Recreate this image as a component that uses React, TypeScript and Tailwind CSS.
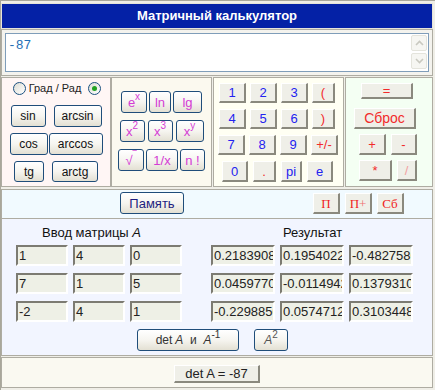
import React from "react";

const xp =
  "flex items-center justify-center rounded-[3px] border border-[#1f4d7a] bg-linear-to-b from-white via-[#f6f5f0] to-[#e3e0d3] leading-none";
const classic =
  "flex items-center justify-center bg-[#efefe8] border border-white border-r-2 border-b-2 border-r-[#8a897e] border-b-[#8a897e] leading-none";
const field =
  "h-[21px] bg-[#eef0e6] border-2 border-t-[#7c7b72] border-l-[#7c7b72] border-b-white border-r-white pl-[1px] text-[13px] leading-[17px] text-[#222] overflow-hidden whitespace-nowrap";

function Radio({ checked }: { checked?: boolean }) {
  return (
    <div className="w-[13px] h-[13px] rounded-full border border-[#1c5180] bg-linear-to-br from-[#dcdcd4] to-white flex items-center justify-center">
      {checked && <div className="w-[5px] h-[5px] rounded-full bg-[#21a121]" />}
    </div>
  );
}

function Sup({ children }: { children: React.ReactNode }) {
  return <span className="relative -top-[5px] text-[10px]">{children}</span>;
}

const matrix = [
  ["1", "4", "0"],
  ["7", "1", "5"],
  ["-2", "4", "1"],
];

const result = [
  ["0.2183908", "0.1954022", "-0.4827586"],
  ["0.0459770", "-0.0114942", "0.1379310"],
  ["-0.2298850", "0.0574712", "0.3103448"],
];

export default function App() {
  const blue = "text-[#2323f0]";
  const red = "text-[#f22b2b]";
  const pink = "text-[#d43cd4]";
  return (
    <div className="w-[435px] h-[390px] overflow-hidden bg-[#efeee7] border-t border-l border-[#a9a79b] pt-[2px] font-['Liberation_Sans',Arial,sans-serif]">
      <div className="w-[432px] flex flex-col">
        {/* title */}
        <div className="h-[26px] border border-[#e6e4da] bg-[#0421a6] flex items-center justify-center text-white font-bold text-[13px]">
          Матричный калькулятор
        </div>

        {/* display */}
        <div className="h-[47px] border border-[#aeaca2] bg-[#f4f3ee] pt-[3px] pl-[3px]">
          <div className="w-[424px] h-[39px] border border-[#7f9db9] bg-white flex">
            <div className="flex-1 pl-[2px] pt-[4px] font-['Liberation_Mono',monospace] text-[13px] leading-[15px] text-[#1f6fb6]">
              -87
            </div>
            <div className="w-[17px] flex flex-col gap-[2px] pt-[1px] pr-[1px]">
              <div className="h-[16px] rounded-[2px] border border-[#e4e4dc] bg-[#f6f6f2] flex items-center justify-center">
                <svg width="9" height="6" viewBox="0 0 9 6"><path d="M1 5 L4.5 1.5 L8 5" stroke="#c9c9c0" strokeWidth="1.6" fill="none" /></svg>
              </div>
              <div className="h-[16px] rounded-[2px] border border-[#e4e4dc] bg-[#f6f6f2] flex items-center justify-center">
                <svg width="9" height="6" viewBox="0 0 9 6"><path d="M1 1 L4.5 4.5 L8 1" stroke="#c9c9c0" strokeWidth="1.6" fill="none" /></svg>
              </div>
            </div>
          </div>
        </div>

        {/* keypad */}
        <div className="mt-[1px] h-[110px] flex">
          {/* trig */}
          <div className="w-[110px] border border-[#aeaca2] bg-[#fff6f5] flex flex-col items-center pt-[4px] text-[12px] text-[#111]">
            <div className="flex items-center h-[13px] ml-[2px]">
              <Radio />
              <span className="ml-[3px] text-[11px] text-[#222]">Град / Рад</span>
              <span className="ml-[7px]"><Radio checked /></span>
            </div>
            <div className="flex gap-[8px] mt-[10px]">
              <div className={`${xp} w-[35px] h-[22px]`}>sin</div>
              <div className={`${xp} w-[48px] h-[22px]`}>arcsin</div>
            </div>
            <div className="flex gap-[1px] mt-[6px]">
              <div className={`${xp} w-[38px] h-[22px]`}>cos</div>
              <div className={`${xp} w-[54px] h-[22px]`}>arccos</div>
            </div>
            <div className="flex gap-[8px] mt-[6px]">
              <div className={`${xp} w-[30px] h-[21px]`}>tg</div>
              <div className={`${xp} w-[46px] h-[21px]`}>arctg</div>
            </div>
          </div>

          {/* powers */}
          <div className={`w-[101px] border border-[#aeaca2] bg-[#fbf9ef] flex flex-col items-center pt-[13px] text-[13px] ${pink}`}>
            <div className="flex gap-[2px]">
              <div className={`${xp} w-[26px] h-[22px]`}>e<Sup>x</Sup></div>
              <div className={`${xp} w-[22px] h-[22px]`}>ln</div>
              <div className={`${xp} w-[29px] h-[22px]`}>lg</div>
            </div>
            <div className="flex gap-[3px] mt-[7px]">
              <div className={`${xp} w-[25px] h-[22px]`}>x<Sup>2</Sup></div>
              <div className={`${xp} w-[25px] h-[22px]`}>x<Sup>3</Sup></div>
              <div className={`${xp} w-[28px] h-[22px]`}>x<Sup>y</Sup></div>
            </div>
            <div className="flex gap-[2px] mt-[7px]">
              <div className={`${xp} w-[26px] h-[22px]`}>√<span className="relative -top-[5px] text-[11px]">‾</span></div>
              <div className={`${xp} w-[32px] h-[22px]`}>1/x</div>
              <div className={`${xp} w-[25px] h-[22px]`}>n !</div>
            </div>
          </div>

          {/* digits */}
          <div className="ml-[1px] w-[131px] border border-[#aeaca2] bg-[#fffff3] flex flex-col pt-[5px] text-[13px]">
            <div className="flex gap-[4px] ml-[5px]">
              <div className={`${classic} w-[27px] h-[20px] ${blue}`}>1</div>
              <div className={`${classic} w-[27px] h-[20px] ${blue}`}>2</div>
              <div className={`${classic} w-[27px] h-[20px] ${blue}`}>3</div>
              <div className={`${classic} w-[23px] h-[20px] ${red}`}>(</div>
            </div>
            <div className="flex gap-[4px] ml-[5px] mt-[6px]">
              <div className={`${classic} w-[27px] h-[20px] ${blue}`}>4</div>
              <div className={`${classic} w-[27px] h-[20px] ${blue}`}>5</div>
              <div className={`${classic} w-[27px] h-[20px] ${blue}`}>6</div>
              <div className={`${classic} w-[23px] h-[20px] ${red}`}>)</div>
            </div>
            <div className="flex gap-[4px] ml-[4px] mt-[6px]">
              <div className={`${classic} w-[27px] h-[20px] ${blue}`}>7</div>
              <div className={`${classic} w-[27px] h-[20px] ${blue}`}>8</div>
              <div className={`${classic} w-[27px] h-[20px] ${blue}`}>9</div>
              <div className={`${classic} w-[27px] h-[20px] ${red}`}>+/-</div>
            </div>
            <div className="flex gap-[5px] ml-[8px] mt-[6px]">
              <div className={`${classic} w-[26px] h-[21px] ${blue}`}>0</div>
              <div className={`${classic} w-[23px] h-[21px] ${red}`}>.</div>
              <div className={`${classic} w-[21px] h-[21px] ${blue}`}>pi</div>
              <div className={`${classic} w-[26px] h-[21px] ${blue}`}>e</div>
            </div>
          </div>

          {/* operators */}
          <div className={`ml-[1px] w-[88px] border border-[#aeaca2] bg-[#f4fff3] flex flex-col pt-[5px] text-[13px] ${red}`}>
            <div className={`${classic} ml-[15px] w-[52px] h-[16px] bg-[#e2e2dc]`}>=</div>
            <div className={`${classic} ml-[8px] mt-[9px] w-[62px] h-[21px] bg-[#e2e2dc] text-[14px]`}>Сброс</div>
            <div className="flex gap-[5px] ml-[13px] mt-[5px]">
              <div className={`${classic} w-[27px] h-[21px]`}>+</div>
              <div className={`${classic} w-[26px] h-[21px]`}>-</div>
            </div>
            <div className="flex gap-[5px] ml-[13px] mt-[5px]">
              <div className={`${classic} w-[33px] h-[21px]`}>*</div>
              <div className={`${classic} w-[20px] h-[21px] text-[#f2a0a0]`}>/</div>
            </div>
          </div>
        </div>

        {/* memory */}
        <div className="mt-[2px] h-[30px] border border-[#aeaca2] bg-[#f1faff] flex items-start pt-[2px]">
          <div className={`${xp} ml-[118px] w-[64px] h-[22px] text-[13px] text-[#1e1e80]`}>Память</div>
          <div className="flex gap-[5px] ml-[129px] mt-[1px] font-['Liberation_Serif',serif] text-[13px] text-[#f01c1c]">
            <div className={`${classic} w-[27px] h-[21px]`}>П</div>
            <div className={`${classic} w-[27px] h-[21px]`}>П<span className="text-[#f07070]">+</span></div>
            <div className={`${classic} w-[27px] h-[21px]`}>Сб</div>
          </div>
        </div>

        {/* matrix */}
        <div className="h-[137px] border border-t-0 border-[#aeaca2] bg-[#f2f5ff] pt-[6px] pl-[14px] text-[13px] text-[#111]">
          <div className="flex h-[15px] leading-[15px]">
            <div className="w-[166px] pl-[26px]">
              Ввод матрицы <i>A</i>
            </div>
            <div className="ml-[29px] pl-[72px]">Результат</div>
          </div>
          <div className="flex mt-[5px]">
            <div className="w-[166px] grid grid-cols-3 gap-x-[5px] gap-y-[7px]">
              {matrix.flat().map((v, i) => (
                <div key={i} className={`${field} w-[52px]`}>{v}</div>
              ))}
            </div>
            <div className="ml-[29px] grid grid-cols-3 gap-x-[5px] gap-y-[7px]">
              {result.flat().map((v, i) => (
                <div key={i} className={`${field} w-[64px]`}>{v}</div>
              ))}
            </div>
          </div>
          <div className="flex mt-[7px] ml-[121px] gap-[15px] text-[#333]">
            <div className={`${xp} w-[102px] h-[22px] text-[12px]`}>
              det <i className="ml-[3px]">A</i>&nbsp;&nbsp;и&nbsp;&nbsp;<i>A</i><Sup>-1</Sup>
            </div>
            <div className={`${xp} w-[34px] h-[22px] text-[12px] text-[#555]`}>
              <i>A</i><Sup>2</Sup>
            </div>
          </div>
        </div>

        {/* det */}
        <div className="mt-[1px] h-[31px] border border-[#aeaca2] bg-[#faf9f1] flex justify-center pt-[7px]">
          <div className={`${classic} w-[86px] h-[18px] text-[13px] text-[#222] bg-[#ecece4]`}>det A = -87</div>
        </div>
      </div>
    </div>
  );
}
